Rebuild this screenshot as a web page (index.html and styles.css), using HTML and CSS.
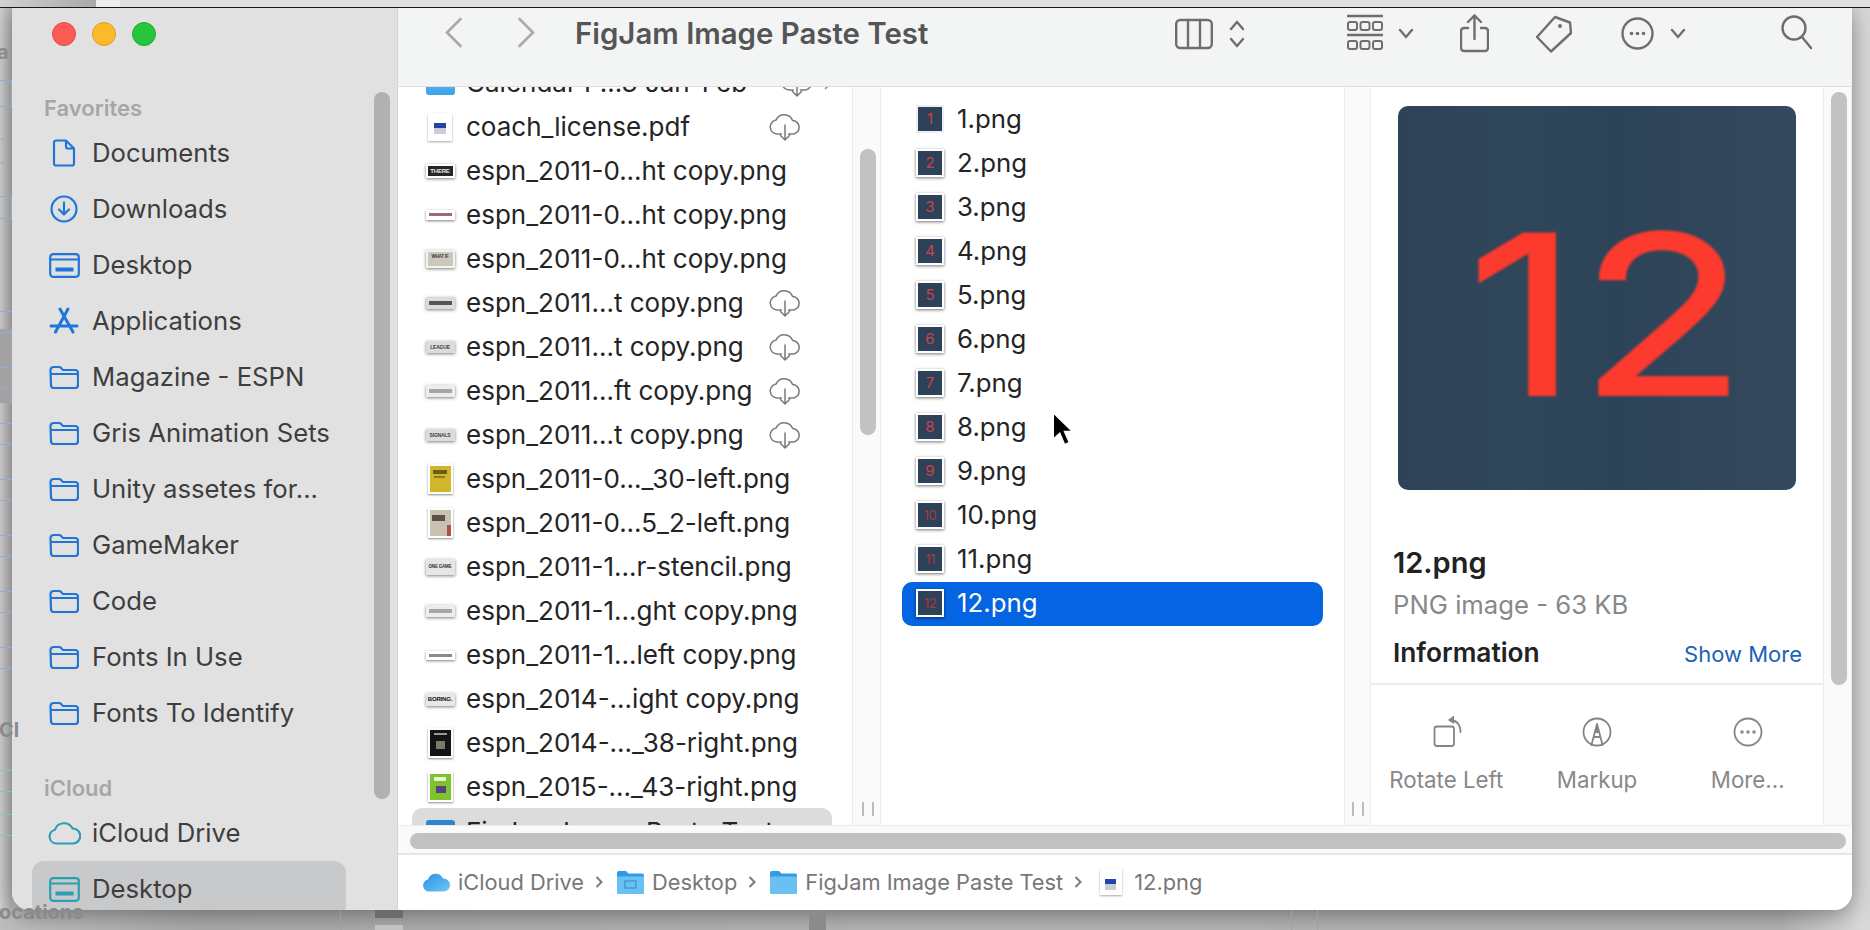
FILE: index.html
```html
<!DOCTYPE html>
<html lang="en">
<head>
<meta charset="utf-8">
<title>FigJam Image Paste Test</title>
<link rel="stylesheet" href="styles.css">
</head>
<body>
<svg class="defs" width="0" height="0" aria-hidden="true">
  <defs>
    <symbol id="i-folder" viewBox="0 0 30 24"><path d="M1.5 5a3 3 0 0 1 3-3h6.5l3 3h12a3 3 0 0 1 3 3v12a3 3 0 0 1-3 3h-21a3 3 0 0 1-3-3zM1.5 9h27"/></symbol>
    <symbol id="i-cloud-dl" viewBox="0 0 32 28"><path d="M12.5 21H8a7 7 0 0 1-1-13.9A9 9 0 0 1 23.600 7.500 6.800 6.800 0 0 1 24.500 21H19.500M16 12v15M11.500 22.500 16 27l4.500-4.500"/></symbol>
  </defs>
</svg>

<div class="behind">
  <span class="ghost-top ghost-top-a"></span>
  <span class="ghost-top ghost-top-b"></span>
  <span class="ghost-label ghost-a">a</span>
  <span class="ghost-icon ghost-doc"></span>
  <span class="ghost-round"></span>
  <span class="ghost-icon ghost-desk"></span>
  <span class="ghost-band"></span>
  <div class="ghost-list">
    <i></i><i></i><i></i><i></i><i></i><i></i><i></i>
  </div>
  <span class="ghost-label ghost-cl">Cl</span>
  <span class="ghost-icon ghost-cloud"></span>
  <span class="ghost-icon ghost-desk2"></span>
  <span class="ghost-label ghost-loc">ocations</span>
  <span class="ghost-col ghost-col-a"></span>
  <span class="ghost-col ghost-col-b"></span>
  <span class="ghost-col ghost-col-c"></span>
  <span class="ghost-thumb"></span>
</div>

<main class="window">
  <aside class="sidebar">
    <div class="lights"><span class="light red"></span><span class="light yellow"></span><span class="light green"></span></div>
    <h2 class="side-head">Favorites</h2>
    <ul class="side-list">
      <li class="side-row"><span class="side-icon"><svg width="24" height="28" viewBox="0 0 24 28"><path d="M4 1.500h10l8 8v15a2 2 0 0 1-2 2H4a2 2 0 0 1-2-2v-21a2 2 0 0 1 2-2zM14 1.500v6a2 2 0 0 0 2 2h6"/></svg></span>Documents</li>
      <li class="side-row"><span class="side-icon"><svg width="28" height="28" viewBox="0 0 28 28"><circle cx="14" cy="14" r="12.500"/><path d="M14 7.500v12M9 14.500l5 5 5-5"/></svg></span>Downloads</li>
      <li class="side-row"><span class="side-icon"><svg width="31" height="25" viewBox="0 0 31 25"><rect x="1.200" y="1.200" width="28.600" height="22.600" rx="3"/><path d="M1.200 6.500h28.600"/><path class="bar" d="M6.500 16.500h18"/></svg></span>Desktop</li>
      <li class="side-row"><span class="side-icon"><svg width="30" height="28" viewBox="0 0 30 28"><path class="thick" d="M19 2 6.500 25M11 2l13 23M2 19h26"/></svg></span>Applications</li>
      <li class="side-row"><span class="side-icon"><svg class="fold" width="30" height="24"><use href="#i-folder"/></svg></span>Magazine - ESPN</li>
      <li class="side-row"><span class="side-icon"><svg class="fold" width="30" height="24"><use href="#i-folder"/></svg></span>Gris Animation Sets</li>
      <li class="side-row"><span class="side-icon"><svg class="fold" width="30" height="24"><use href="#i-folder"/></svg></span>Unity assetes for...</li>
      <li class="side-row"><span class="side-icon"><svg class="fold" width="30" height="24"><use href="#i-folder"/></svg></span>GameMaker</li>
      <li class="side-row"><span class="side-icon"><svg class="fold" width="30" height="24"><use href="#i-folder"/></svg></span>Code</li>
      <li class="side-row"><span class="side-icon"><svg class="fold" width="30" height="24"><use href="#i-folder"/></svg></span>Fonts In Use</li>
      <li class="side-row"><span class="side-icon"><svg class="fold" width="30" height="24"><use href="#i-folder"/></svg></span>Fonts To Identify</li>
    </ul>
    <h2 class="side-head side-head-icloud">iCloud</h2>
    <ul class="side-list">
      <li class="side-row"><span class="side-icon teal"><svg width="33" height="24" viewBox="0 0 33 24"><path d="M8.500 22.500a7 7 0 0 1-1.500-13.800A9.500 9.500 0 0 1 24.500 7.500a7.500 7.500 0 0 1 .5 15z"/></svg></span>iCloud Drive</li>
      <li class="side-row side-selected"><span class="side-icon teal"><svg width="31" height="25" viewBox="0 0 31 25"><rect x="1.200" y="1.200" width="28.600" height="22.600" rx="3"/><path d="M1.200 6.500h28.600"/><path class="bar" d="M6.500 16.500h18"/></svg></span>Desktop</li>
    </ul>
    <div class="side-scroll"></div>
  </aside>

  <section class="main">
    <header class="toolbar">
      <svg class="nav nav-back" width="17" height="40" viewBox="0 0 17 40"><path d="M15.500 5 2 18.500 15.500 32"/></svg>
      <svg class="nav nav-fwd" width="17" height="40" viewBox="0 0 17 40"><path d="M1.500 5 15 18.500 1.500 32"/></svg>
      <h1 class="title">FigJam Image Paste Test</h1>

      <div class="tool-group">
        <svg width="38" height="40" viewBox="0 0 38 40"><rect x="1.200" y="6" width="35.600" height="28" rx="4"/><path d="M13 6v28M25 6v28"/></svg>
        <svg width="16" height="40" viewBox="0 0 16 40"><path d="M2 15l6-7 6 7M2 25l6 7 6-7"/></svg>
      </div>
      <div class="tool-group tg-view">
        <svg width="36" height="40" viewBox="0 0 36 40"><path d="M0 2h36M0 21h36"/><g class="thin"><rect x="1" y="8" width="9" height="8" rx="2"/><rect x="13.500" y="8" width="9" height="8" rx="2"/><rect x="26" y="8" width="9" height="8" rx="2"/><rect x="1" y="27" width="9" height="8" rx="2"/><rect x="13.500" y="27" width="9" height="8" rx="2"/><rect x="26" y="27" width="9" height="8" rx="2"/></g></svg>
        <svg width="16" height="40" viewBox="0 0 16 40"><path d="M2 16l6 7 6-7"/></svg>
      </div>
      <svg class="tool tg-share" width="29" height="40" viewBox="0 0 29 40"><path d="M8 14H4a3 3 0 0 0-3 3v17a3 3 0 0 0 3 3h21a3 3 0 0 0 3-3V17a3 3 0 0 0-3-3h-4M14.500 25V2M8 8l6.500-6.500L21 8"/></svg>
      <svg class="tool tg-tag" width="37" height="40" viewBox="0 0 37 40"><path stroke-linejoin="round" d="M20 3 35 8.500 36 19 16 37.500 2 23z"/><circle class="dot" cx="25" cy="12" r="2"/></svg>
      <div class="tool-group tg-more">
        <svg width="33" height="40" viewBox="0 0 33 40"><circle cx="16.500" cy="19.500" r="15"/><circle class="dot" cx="10.500" cy="19.500" r="1.800"/><circle class="dot" cx="16.500" cy="19.500" r="1.800"/><circle class="dot" cx="22.500" cy="19.500" r="1.800"/></svg>
        <svg width="16" height="40" viewBox="0 0 16 40"><path d="M2 16l6 7 6-7"/></svg>
      </div>
      <svg class="tool tg-search" width="31" height="40" viewBox="0 0 31 40"><circle cx="13" cy="14" r="11.500"/><path d="M21 23l9 11"/></svg>
    </header>

    <div class="columns">
      <div class="pane pane-files">
        <ul class="file-list file-list-scrolled">
          <li class="file"><span class="thumb"><span class="mini-folder"></span></span><span class="fname">Calendar P...3 Jan-Feb</span><svg class="cloud" width="32" height="28"><use href="#i-cloud-dl"/></svg><svg class="disclose" width="8" height="14" viewBox="0 0 8 14"><path d="M1 1l6 6-6 6"/></svg></li>
          <li class="file"><span class="thumb"><span class="pdf"><i></i></span></span><span class="fname">coach_license.pdf</span><svg class="cloud" width="32" height="28"><use href="#i-cloud-dl"/></svg></li>
          <li class="file"><span class="thumb"><span class="wide w-there">THERE</span></span><span class="fname">espn_2011-0...ht copy.png</span></li>
          <li class="file"><span class="thumb"><span class="wide w-pink"><i></i></span></span><span class="fname">espn_2011-0...ht copy.png</span></li>
          <li class="file"><span class="thumb"><span class="wide w-what">WHAT IF</span></span><span class="fname">espn_2011-0...ht copy.png</span></li>
          <li class="file"><span class="thumb"><span class="wide w-band"><i></i></span></span><span class="fname">espn_2011...t copy.png</span><svg class="cloud" width="32" height="28"><use href="#i-cloud-dl"/></svg></li>
          <li class="file"><span class="thumb"><span class="wide w-band">LEAGUE</span></span><span class="fname">espn_2011...t copy.png</span><svg class="cloud" width="32" height="28"><use href="#i-cloud-dl"/></svg></li>
          <li class="file"><span class="thumb"><span class="wide w-soft"><i></i></span></span><span class="fname">espn_2011...ft copy.png</span><svg class="cloud" width="32" height="28"><use href="#i-cloud-dl"/></svg></li>
          <li class="file"><span class="thumb"><span class="wide w-band">SIGNALS</span></span><span class="fname">espn_2011...t copy.png</span><svg class="cloud" width="32" height="28"><use href="#i-cloud-dl"/></svg></li>
          <li class="file"><span class="thumb"><span class="tall t-yellow"><i></i></span></span><span class="fname">espn_2011-0..._30-left.png</span></li>
          <li class="file"><span class="thumb"><span class="tall t-cream"><i></i></span></span><span class="fname">espn_2011-0...5_2-left.png</span></li>
          <li class="file"><span class="thumb"><span class="wide w-game">ONE GAME</span></span><span class="fname">espn_2011-1...r-stencil.png</span></li>
          <li class="file"><span class="thumb"><span class="wide w-soft"><i></i></span></span><span class="fname">espn_2011-1...ght copy.png</span></li>
          <li class="file"><span class="thumb"><span class="wide w-thin"><i></i></span></span><span class="fname">espn_2011-1...left copy.png</span></li>
          <li class="file"><span class="thumb"><span class="wide w-bold">BORING.</span></span><span class="fname">espn_2014-...ight copy.png</span></li>
          <li class="file"><span class="thumb"><span class="tall t-black"><i></i></span></span><span class="fname">espn_2014-..._38-right.png</span></li>
          <li class="file"><span class="thumb"><span class="tall t-green"><i></i></span></span><span class="fname">espn_2015-..._43-right.png</span></li>
          <li class="file file-open"><span class="thumb"><span class="mini-folder"></span></span><span class="fname">FigJam Image Paste Test</span></li>
        </ul>
      </div>
      <div class="gutter">
        <div class="gutter-thumb"></div>
        <span class="handle"></span>
      </div>

      <div class="pane pane-images">
        <ul class="file-list image-list">
          <li class="img-row"><span class="num num-plain">1</span>1.png</li>
          <li class="img-row"><span class="num">2</span>2.png</li>
          <li class="img-row"><span class="num">3</span>3.png</li>
          <li class="img-row"><span class="num">4</span>4.png</li>
          <li class="img-row"><span class="num">5</span>5.png</li>
          <li class="img-row"><span class="num">6</span>6.png</li>
          <li class="img-row"><span class="num">7</span>7.png</li>
          <li class="img-row"><span class="num">8</span>8.png</li>
          <li class="img-row"><span class="num">9</span>9.png</li>
          <li class="img-row"><span class="num num-two">10</span>10.png</li>
          <li class="img-row"><span class="num num-two">11</span>11.png</li>
          <li class="img-row img-selected"><span class="num num-two">12</span>12.png</li>
        </ul>
      </div>
      <div class="gutter gutter-plain"><span class="handle"></span></div>

      <div class="pane pane-preview">
        <div class="preview-image"><span class="preview-digits">12</span></div>
        <div class="preview-name">12.png</div>
        <div class="preview-type">PNG image - 63 KB</div>
        <div class="preview-info"><span class="info-title">Information</span><span class="info-more">Show More</span></div>
        <div class="actions">
          <div class="action">
            <svg width="36" height="36" viewBox="0 0 36 36"><rect x="6.500" y="12.500" width="19.500" height="19.500" rx="2.500"/><path d="M32.500 18C32.500 10 28 6 21.500 6"/><path class="fillhead" d="M26 1.500 20 6l6 4z"/></svg>
            <span>Rotate Left</span>
          </div>
          <div class="action">
            <svg width="36" height="36" viewBox="0 0 36 36"><circle cx="18" cy="18" r="13.500"/><path d="M12.500 31 18 10l5.500 21M14.500 23h7"/><path class="fillhead" d="M18 9l-3 10h6z"/></svg>
            <span>Markup</span>
          </div>
          <div class="action">
            <svg width="36" height="36" viewBox="0 0 36 36"><circle cx="18" cy="18" r="13.500"/><circle class="fillhead" cx="12" cy="18" r="1.700"/><circle class="fillhead" cx="18" cy="18" r="1.700"/><circle class="fillhead" cx="24" cy="18" r="1.700"/></svg>
            <span>More...</span>
          </div>
        </div>
      </div>
      <div class="gutter gutter-last"><div class="gutter-thumb gutter-thumb-last"></div></div>
    </div>

    <div class="hscroll"><div class="hscroll-thumb"></div></div>

    <footer class="pathbar">
      <svg class="crumb-icon" width="29" height="20" viewBox="0 0 29 20"><defs><linearGradient id="cl" x1="0" y1="0" x2="1" y2="1"><stop offset="0" stop-color="#2f8fe8"/><stop offset="1" stop-color="#6cc8f5"/></linearGradient></defs><path fill="url(#cl)" d="M7 19.500a6 6 0 0 1-1-11.900A8 8 0 0 1 21 6.500a6.500 6.500 0 0 1 1 13z"/></svg>
      <span class="crumb crumb-first">iCloud Drive</span>
      <svg class="sep" width="8" height="14" viewBox="0 0 8 14"><path d="M1.500 2l5 5-5 5"/></svg>
      <svg class="crumb-folder" width="27" height="24" viewBox="0 0 27 24"><path fill="#2f9be6" d="M0 3a2 2 0 0 1 2-2h7l2.500 2.500H25a2 2 0 0 1 2 2V22a2 2 0 0 1-2 2H2a2 2 0 0 1-2-2z"/><path fill="#69c1f3" d="M0 6.500h27V22a2 2 0 0 1-2 2H2a2 2 0 0 1-2-2z"/><rect x="8" y="11" width="11" height="7" fill="none" stroke="#3f8fc9" stroke-width="1.200"/></svg>
      <span class="crumb">Desktop</span>
      <svg class="sep" width="8" height="14" viewBox="0 0 8 14"><path d="M1.500 2l5 5-5 5"/></svg>
      <svg class="crumb-folder" width="27" height="24" viewBox="0 0 27 24"><path fill="#2f9be6" d="M0 3a2 2 0 0 1 2-2h7l2.500 2.500H25a2 2 0 0 1 2 2V22a2 2 0 0 1-2 2H2a2 2 0 0 1-2-2z"/><path fill="#69c1f3" d="M0 6.500h27V22a2 2 0 0 1-2 2H2a2 2 0 0 1-2-2z"/></svg>
      <span class="crumb">FigJam Image Paste Test</span>
      <svg class="sep" width="8" height="14" viewBox="0 0 8 14"><path d="M1.500 2l5 5-5 5"/></svg>
      <span class="pdf crumb-file"><i></i></span>
      <span class="crumb">12.png</span>
    </footer>
  </section>
</main>

<svg class="cursor" width="24" height="37" viewBox="0 0 22 34"><path fill="#000" stroke="#fff" stroke-width="1.500" d="M2 1.500V26l6-5.500 4.500 10.500 4.500-2-4.500-10H20z"/></svg>
</body>
</html>
```

FILE: styles.css
```css
* { box-sizing: border-box; }
html, body { margin: 0; padding: 0; }
body {
  width: 1870px;
  height: 930px;
  position: relative;
  overflow: hidden;
  background: linear-gradient(90deg, #bdbdbd 0, #a9a9a9 200px, #b4b4b4 900px, #b2b2b2 1780px, #d8d8d8 1860px);
  font-family: Inter, "Noto Sans", "Liberation Sans", sans-serif;
  color: #242424;
}
ul { list-style: none; margin: 0; padding: 0; }
h1, h2 { margin: 0; }
svg { display: block; flex: none; }
.defs { position: absolute; }

/* the window behind */
.behind { position: absolute; inset: 0; }
.behind > * { position: absolute; }
.ghost-top { top: 0; height: 7px; }
.ghost-top-a { left: 0; width: 96px; background: linear-gradient(90deg, #d2d2d2, #a8a8a8); }
.ghost-top-b { left: 96px; right: 0; background: #e0e0e0; border-left: 24px solid #eeeeee; }
.behind::before { content: ""; position: absolute; left: 0; right: 0; top: 6px; height: 2px; background: #1c1c1c; }
.behind::after { content: ""; position: absolute; left: 0; top: 8px; width: 12px; height: 900px; background: linear-gradient(90deg, #d0d0d0, #b5b5b5); z-index: 0; }
.behind > * { z-index: 1; }
.ghost-label { font-weight: 700; font-size: 20px; color: #8a8a8a; left: 0; line-height: 24px; }
.ghost-a { top: 40px; left: -3px; }
.ghost-cl { top: 718px; left: -1px; }
.ghost-loc { top: 900px; left: -1px; }
.ghost-icon { left: -8px; width: 20px; border: 1px solid #8cadd6; }
.ghost-doc { top: 80px; height: 27px; }
.ghost-round { left: -8px; top: 138px; width: 26px; height: 26px; border: 1px solid #8cadd6; border-radius: 50%; clip-path: inset(0 14px 0 0); }
.ghost-desk { top: 196px; height: 23px; }
.ghost-band { left: 0; top: 329px; width: 12px; height: 74px; background: #a2a2a2; }
.ghost-list { left: 0; top: 311px; width: 12px; display: flex; flex-direction: column; gap: 34px; }
.ghost-list i { display: block; height: 22px; border-top: 1px solid #8cadd6; border-bottom: 1px solid #8cadd6; }
.ghost-cloud { top: 770px; height: 22px; border-color: #8cbcc8; border-left: 0; border-right: 0; }
.ghost-desk2 { top: 814px; height: 22px; border-color: #8cbcc8; border-left: 0; border-right: 0; }
.ghost-col { bottom: 0; height: 20px; }
.ghost-col-a { left: 340px; width: 1px; background: #9c9c9c; }
.ghost-col-b { left: 809px; width: 17px; background: #8b8b8b; }
.ghost-col-c { left: 1291px; width: 27px; border-left: 1px solid #a0a0a0; border-right: 1px solid #a0a0a0; }
.ghost-thumb { left: 375px; bottom: 0; width: 28px; height: 20px; border-top: 8px solid #6c6c6c; border-bottom: 5px solid #c2c2c2; }

/* window */
.window {
  position: absolute;
  left: 12px;
  top: 8px;
  width: 1840px;
  height: 902px;
  display: flex;
  overflow: hidden;
  background: #fff;
  border-radius: 0 0 18px 18px;
  box-shadow: 0 4px 22px rgba(0, 0, 0, .38);
}

/* sidebar */
.sidebar {
  position: relative;
  width: 386px;
  flex: none;
  padding-top: 14px;
  overflow: hidden;
  background: #e1e1e1;
  border-right: 1px solid #d4d4d4;
}
.lights { display: flex; gap: 16px; padding-left: 40px; }
.light { width: 24px; height: 24px; border-radius: 50%; }
.red { background: #fe5b56; border: 1px solid #e8483f; }
.yellow { background: #fdb92c; border: 1px solid #dd9e1e; }
.green { background: #27c43d; border: 1px solid #1fa92e; }
.side-head {
  height: 36px;
  margin-top: 44px;
  margin-bottom: -1px;
  padding-left: 32px;
  font-size: 22px;
  font-weight: 600;
  line-height: 36px;
  color: #a6a6a6;
}
.side-head-icloud { margin-top: 29px; }
.side-list { width: 314px; margin-left: 20px; }
.side-row {
  display: flex;
  align-items: center;
  height: 56px;
  padding: 0 0 2px 12px;
  font-size: 25.700px;
  color: #3e3e3e;
  white-space: nowrap;
  border-radius: 12px;
}
.side-selected { background: #c8c9cb; }
.side-icon { width: 40px; margin: 2px 8px 0 0; display: flex; justify-content: center; flex: none; }
.side-icon svg { fill: none; stroke: #1f76d8; stroke-width: 2.2; stroke-linejoin: round; stroke-linecap: round; }
.side-icon .bar { stroke-width: 4; stroke-linecap: butt; }
.side-icon .thick { stroke-width: 3; }
.side-icon.teal svg { stroke: #2ba0b4; }
.fold use { fill: none; }
.side-scroll {
  position: absolute;
  left: 362px;
  top: 84px;
  width: 16px;
  height: 707px;
  border-radius: 8px;
  background: #b1b1b1;
}

/* main */
.main { flex: 1; min-width: 0; display: flex; flex-direction: column; position: relative; }
.toolbar {
  display: flex;
  align-items: flex-start;
  flex: none;
  height: 79px;
  padding: 6px 40px 0 47px;
  background: #f3f5f5;
  border-bottom: 1px solid #dedede;
}
.toolbar svg { fill: none; stroke: #6e6e6e; stroke-width: 2.400; stroke-linecap: round; }
.toolbar .nav { stroke: #a9a9a9; stroke-width: 2.600; }
.nav-fwd { margin-left: 56px; }
.toolbar .dot { fill: #6e6e6e; stroke: none; }
.toolbar .thin { stroke-width: 2; }
.title {
  flex: 1;
  margin-left: 40px;
  font-size: 29.400px;
  font-weight: 600;
  line-height: 40px;
  color: #555;
  white-space: nowrap;
}
.tool-group { display: flex; gap: 16.500px; }
.tg-view { margin-left: 101.500px; gap: 15px; }
.tg-share { margin-left: 46px; }
.tg-tag { margin-left: 46px; }
.tg-more { margin-left: 49px; }
.tg-search { margin-left: 95px; }

.columns {
  flex: 1;
  min-height: 0;
  display: grid;
  grid-template-columns: 454px 29px 463px 27px 452px 29px;
}
.pane { min-width: 0; overflow: hidden; background: #fff; }
.gutter {
  position: relative;
  background: #fafafa;
  border-left: 1px solid #ececec;
  border-right: 1px solid #ececec;
}
.gutter-thumb {
  position: absolute;
  left: 7px;
  top: 62px;
  width: 16px;
  height: 286px;
  border-radius: 8px;
  background: #c2c2c2;
}
.gutter-thumb-last { top: 5px; height: 593px; }
.handle {
  position: absolute;
  left: 9px;
  bottom: 9px;
  width: 12px;
  height: 14px;
  border-left: 2px solid #bdbdbd;
  border-right: 2px solid #bdbdbd;
}
.gutter-plain .handle { left: 7px; }

.file-list-scrolled { margin-top: -26px; }
.file {
  display: flex;
  align-items: center;
  height: 44px;
  margin-right: 20px;
  margin-left: 14px;
  padding-left: 13px;
  font-size: 26px;
  white-space: nowrap;
}
.file-open { background: #dcdcdc; border-radius: 10px; margin-top: -1px; padding-top: 3px; }
.thumb { width: 30px; margin-right: 11px; display: flex; justify-content: center; flex: none; }
.fname { flex: 1; margin-top: -1px; }
.cloud { fill: none; stroke: #7a7a7a; stroke-width: 1.500; margin-right: 31px; stroke-linecap: round; stroke-linejoin: round; }
.disclose { fill: none; stroke: #8a8a8a; stroke-width: 1.500; margin-left: -20px; }

.mini-folder { display: block; width: 29px; height: 24px; border-radius: 3px; background: linear-gradient(#6cc4f3, #3aa2e8); }
.file-open .mini-folder { background: #2f86cf; }
.pdf {
  display: block;
  position: relative;
  width: 24px;
  height: 28px;
  background: #fff;
  box-shadow: 0 1px 2px rgba(0, 0, 0, .35);
}
.pdf i {
  position: absolute;
  left: 6px;
  top: 10px;
  width: 12px;
  height: 11px;
  background: linear-gradient(#2444a8 45%, #c8cdd6 45%);
}
.wide {
  display: block;
  width: 29px;
  overflow: hidden;
  text-align: center;
  font-family: "Liberation Sans", sans-serif;
  font-size: 5px;
  font-weight: 700;
  letter-spacing: -.2px;
  white-space: nowrap;
  background: #fff;
  box-shadow: 0 1px 3px rgba(0, 0, 0, .5);
}
.wide i { display: block; }
.w-there { height: 14px; padding: 0 1px; font-size: 6px; line-height: 10px; color: #e8e8e8; background: #262626; border: 2px solid #fff; }
.w-pink { height: 10px; padding: 3px 3px; }
.w-pink i { height: 3px; background: #9b6a73; }
.w-what { height: 18px; padding-top: 1px; font-size: 4.500px; line-height: 7px; color: #3b3630; background: #cec8bc; border: 2px solid #f2f2f2; }
.w-band { height: 12px; line-height: 12px; color: #3d3d3d; background: #dcdcdc; }
.w-band i { height: 4px; margin: 4px 3px; background: #555; }
.w-soft { height: 12px; padding: 4px 3px; background: #ededed; }
.w-soft i { height: 4px; background: #a5a5a5; }
.w-game { height: 16px; font-size: 4.500px; line-height: 16px; color: #333; background: #e6e6e6; }
.w-thin { height: 9px; padding: 3px 3px; }
.w-thin i { height: 3px; background: #8a8a8a; }
.w-bold { height: 13px; font-size: 6px; line-height: 13px; color: #111; background: #e8e8e8; }
.tall {
  display: block;
  width: 25px;
  height: 30px;
  padding: 2px;
  background: #fff;
  box-shadow: 0 1px 2px rgba(0, 0, 0, .45);
}
.tall i { display: block; width: 100%; height: 100%; }
.t-yellow i { background: linear-gradient(#6b5c1c, #6b5c1c) 50% 4px / 14px 4px no-repeat, linear-gradient(#8a7a20, #8a7a20) 40% 10px / 11px 2px no-repeat, #d2b62a; }
.t-cream i { background: linear-gradient(#5b5046, #5b5046) 30% 5px / 13px 6px no-repeat, linear-gradient(#a9553f, #a9553f) 100% 100% / 4px 11px no-repeat, #c9c2b2; }
.t-black i { background: linear-gradient(#7c7a66, #7c7a66) 50% 60% / 9px 8px no-repeat, linear-gradient(#9a9a9a, #9a9a9a) 50% 3px / 13px 2px no-repeat, #141414; }
.t-green i { background: linear-gradient(#54437c, #54437c) 60% 62% / 10px 7px no-repeat, linear-gradient(#e8f3d8, #e8f3d8) 50% 3px / 12px 4px no-repeat, #7fc22f; }

/* image column */
.image-list { padding-top: 11px; }
.img-row {
  display: flex;
  align-items: center;
  height: 44px;
  margin: 0 21px;
  padding: 0 0 4px 14px;
  font-size: 25.800px;
  border-radius: 10px;
}
.num {
  width: 28px;
  height: 28px;
  margin: 2px 13px 0 0;
  flex: none;
  text-align: center;
  font-size: 15px;
  line-height: 24px;
  color: #c8434a;
  background: #2d4259;
  border: 2px solid #fff;
  box-shadow: 0 1px 3px rgba(0, 0, 0, .55);
}
.num-plain { border-color: #eaf0f6; box-shadow: none; }
.num-two { font-size: 13px; letter-spacing: -.5px; color: #a8393f; }
.img-selected { background: #0564e1; color: #fff; }

/* preview */
.pane-preview { display: flex; flex-direction: column; }
.preview-image {
  height: 384px;
  width: 398px;
  margin: 19px 0 0 27px;
  padding-left: 20px;
  overflow: hidden;
  border-radius: 10px;
  flex: none;
  text-align: center;
  font-size: 222px;
  font-weight: 400;
  line-height: 418px;
  color: #fc3a2e;
  background: linear-gradient(90deg, #2e4358, #304659 30%, #2d4358 55%, #34495e);
}
.preview-digits {
  display: inline-block;
  -webkit-text-stroke: 2px #fc3a2e;
  transform: scaleX(1.240);
  filter: blur(1px);
}
.preview-name { margin: 57px 0 0 22px; font-size: 29px; font-weight: 600; line-height: 32px; color: #222; }
.preview-type { margin: 11px 0 0 22px; font-size: 25.700px; line-height: 30px; color: #888; }
.preview-info {
  display: flex;
  align-items: baseline;
  justify-content: space-between;
  margin-top: 17px;
  padding: 0 21px 0 22px;
  height: 48px;
  line-height: 32px;
  border-bottom: 2px solid #ececec;
}
.info-title { font-size: 26.300px; font-weight: 600; color: #222; }
.info-more { font-size: 22px; color: #1c62b9; }
.actions { display: grid; grid-template-columns: repeat(3, 1fr); padding-top: 29px; }
.action { display: flex; flex-direction: column; align-items: center; gap: 16px; font-size: 22.300px; line-height: 28px; color: #888; }
.action svg { fill: none; stroke: #858585; stroke-width: 1.800; stroke-linecap: round; stroke-linejoin: round; }
.action .fillhead { fill: #858585; stroke: none; }

/* bottom bars */
.hscroll { flex: none; height: 30px; padding: 7px 6px 0 12px; background: #fafafa; border-top: 1px solid #ececec; border-bottom: 2px solid #e6e6e6; }
.hscroll-thumb { height: 16px; border-radius: 8px; background: #c1c1c1; }
.pathbar {
  flex: none;
  display: flex;
  align-items: center;
  height: 55px;
  padding: 0 0 1px 24px;
  font-size: 21.800px;
  color: #777;
  white-space: nowrap;
  background: #fff;
}
.crumb-first { margin-left: 7px; }
.crumb-folder { margin-right: 8px; }
.crumb-file { width: 22px; height: 26px; margin: 0 12px 0 4px; }
.crumb-file i { left: 5px; width: 11px; }
.sep { fill: none; stroke: #7a7a7a; stroke-width: 2; margin: 0 14px 0 11px; }

.cursor { position: absolute; left: 1051px; top: 411px; }
```
